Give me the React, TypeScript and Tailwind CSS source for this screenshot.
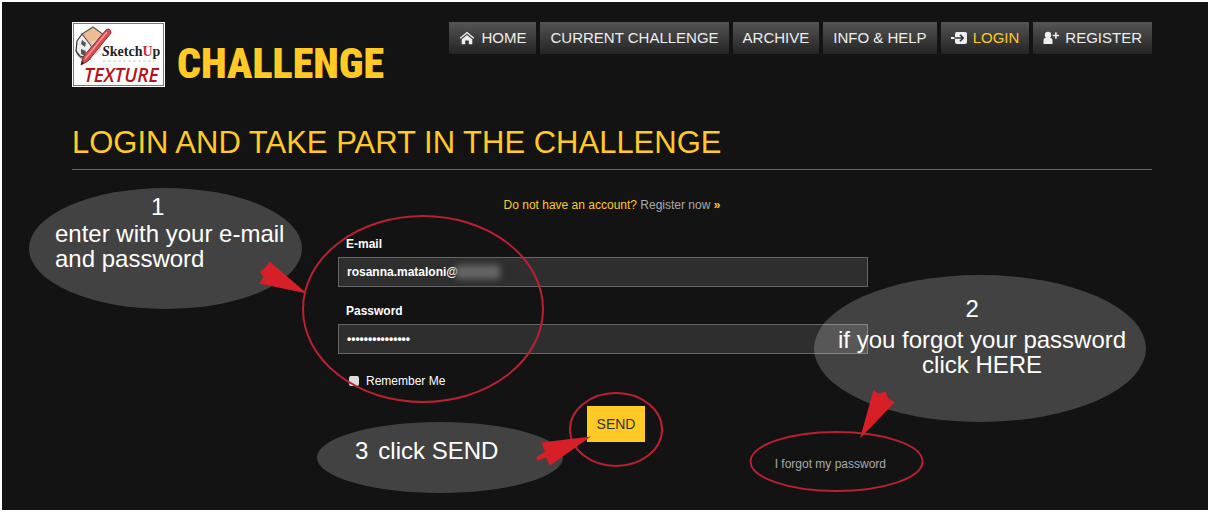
import React, { useState } from 'react';

interface NavItem {
    label: string;
    icon?: React.ComponentType;
    active?: boolean;
}

const HomeIcon: React.FC = () => (
    <svg viewBox="0 0 16 14" className="mr-1.5 h-3.5 w-4" fill="currentColor" aria-hidden="true">
        <path d="M8 0.8 L15.3 6.8 L14.4 7.8 L8 2.6 L1.6 7.8 L0.7 6.8 Z" />
        <path d="M8 3.9 L13.3 8.2 V13.2 H9.8 V9.6 H6.2 V13.2 H2.7 V8.2 Z" />
    </svg>
);

const LoginIcon: React.FC = () => (
    <svg viewBox="0 0 16 14" className="mr-1.5 h-3.5 w-4" aria-hidden="true">
        <rect x="4" y="1" width="12" height="12" rx="2" fill="currentColor" />
        <path d="M0 7 H3.5" stroke="currentColor" strokeWidth="2" />
        <path d="M4 7 H12 M9 3.8 L12.2 7 L9 10.2" stroke="#333" strokeWidth="1.6" fill="none" />
    </svg>
);

const RegisterIcon: React.FC = () => (
    <svg viewBox="0 0 16 14" className="mr-1.5 h-3.5 w-4" fill="currentColor" aria-hidden="true">
        <circle cx="5" cy="4" r="3.2" />
        <path d="M0.5 13 V10 Q0.5 6.8 3 6.8 H7 Q9.5 6.8 9.5 10 V13 Z" />
        <path d="M12.1 1.2 H13.7 V3.7 H16 V5.3 H13.7 V7.8 H12.1 V5.3 H9.7 V3.7 H12.1 Z" />
    </svg>
);

const navItems: NavItem[] = [
    { label: 'HOME', icon: HomeIcon },
    { label: 'CURRENT CHALLENGE' },
    { label: 'ARCHIVE' },
    { label: 'INFO & HELP' },
    { label: 'LOGIN', icon: LoginIcon, active: true },
    { label: 'REGISTER', icon: RegisterIcon },
];

const Logo: React.FC = () => (
    <svg viewBox="0 0 93 65" className="h-[65px] w-[93px] shrink-0" role="img" aria-label="SketchUp Texture">
        <rect width="93" height="65" fill="#fff" />
        <rect x="1.5" y="1.5" width="90" height="62" fill="#fff" stroke="#777" />
        <path d="M5 19 L10 12 L20 20 L18 37 L8 34 L4 29 Z" fill="#eee" stroke="#333" strokeWidth="1.2" />
        <path d="M10 12 L21 5 L32 13 L20 25 Z" fill="#eebc94" stroke="#555" strokeWidth="1.1" />
        <path d="M20 20 L30 16 L29 28 L18 37 Z" fill="#ddd" />
        <path d="M10 18 L14 21 L13 25 L9 22 Z M9 27 L14 29 L13 34 L9 32 Z" fill="#555" />
        <path d="M4 28 Q6 39 16 36" stroke="#444" fill="none" />
        <path d="M34 8 Q38 5 39 11 L16 39 L9 43 L11 35 Z" fill="#d94d4f" stroke="#872c30" strokeWidth="1" />
        <path d="M35 10 L13 37" stroke="#f69a99" strokeWidth="1.5" />
        <path d="M9 43 L10 39 L12 41 Z" fill="#222" />
        <text x="30" y="34" fontSize="14" fontFamily="'Liberation Serif', serif" fontWeight="bold" fill="#222">
            <tspan fontStyle="italic">S</tspan>ketch<tspan fill="#d62c35">U</tspan>p
        </text>
        <path d="M31 39 H86" stroke="#e5e5e5" strokeWidth="2" strokeDasharray="3 2" />
        <text x="12" y="60" fontSize="19" fontFamily="'Open Sans', sans-serif" fontStyle="italic" fontWeight="600" fill="#b3161c">TEXTURE</text>
    </svg>
);

// Circles and arrows drawn over the login page
const Markers: React.FC = () => (
    <svg viewBox="2 2 1206 508" className="pointer-events-none absolute left-0 top-0 h-[508px] w-[1206px]" aria-hidden="true">
        <g fill="#fff" fillOpacity="0.2">
            <ellipse cx="165.5" cy="248.5" rx="136.5" ry="60.5" />
            <ellipse cx="980" cy="348.5" rx="166" ry="73.5" />
            <ellipse cx="440" cy="457.5" rx="123" ry="35.5" />
        </g>
        <g fill="none" stroke="#b92030" strokeWidth="2">
            <ellipse cx="423" cy="309" rx="120" ry="93" />
            <ellipse cx="616" cy="429.5" rx="46" ry="36.5" />
            <ellipse cx="836.5" cy="461.5" rx="86" ry="29.5" />
        </g>
        <g fill="#d71f27">
            <path d="M269.5 261.5 L307 293.5 L259 283.5 L263.5 277 L260 272 L265.5 267.5 Z" />
            <path d="M860 438.5 L873.5 390 L878.5 393.5 L886 391.5 L887.5 397.5 L894.5 402.5 Z" />
            <path d="M591 436.5 L541.5 442.5 L545 451.5 L536 457.5 L538 460.5 L546 457.5 L550 465.5 Z" />
        </g>
    </svg>
);

const inputClass = 'block w-full border border-[#666] bg-[#2e2e2e] px-2 text-xs font-bold text-white outline-none';

const App: React.FC = () => {
    const [email, setEmail] = useState('rosanna.mataloni@');
    const [password, setPassword] = useState('challenge-entry');
    const [remember, setRemember] = useState(false);

    return (
        <div className="relative min-h-screen overflow-hidden border-2 border-white bg-[#131313] pb-8 pl-[70px] pr-14 font-['Liberation_Sans',Arial,sans-serif] text-white">
            <header className="flex items-start justify-between pt-5">
                <a href="#home" className="flex items-start">
                    <Logo />
                    <span className="ml-3 mt-[18px] font-[Impact,'Roboto_Condensed',Roboto,sans-serif] text-[42px] font-black leading-[48px] text-[#ffc926]">CHALLENGE</span>
                </a>
                <nav className="flex gap-1">
                    {navItems.map(({ label, icon: Icon, active }) => (
                        <a
                            key={label}
                            href={`#${label.toLowerCase().replace(/\W+/g, '-')}`}
                            className="flex h-8 items-center whitespace-nowrap bg-linear-to-b from-[#555] to-[#242424] px-2.5 text-[15px] text-[#eee]"
                        >
                            {Icon && <Icon />}
                            <span className={active ? 'text-[#ffc926]' : ''}>{label}</span>
                        </a>
                    ))}
                </nav>
            </header>

            <main>
                <h1 className="mt-9 border-b border-[#666] pb-2 text-[31px] leading-[37px] text-[#ffc926]">LOGIN AND TAKE PART IN THE CHALLENGE</h1>
                <p className="mt-[27px] text-center text-xs text-[#ffc926]">
                    Do not have an account? <a href="#register" className="text-[#aaa]">Register now</a> <b>»</b>
                </p>

                <form className="mx-auto mt-[23px] w-[548px] max-w-full" onSubmit={e => e.preventDefault()}>
                    <div className="mr-[18px]">
                        <label htmlFor="email" className="block pl-2 text-xs font-bold">E-mail</label>
                        <div className="relative mt-[5px]">
                            <input id="email" type="text" value={email} onChange={e => setEmail(e.target.value)} className={`${inputClass} h-[30px]`} />
                            <span className="absolute left-[118px] top-2 h-3.5 w-11 bg-[#666] blur-[3px]" />
                        </div>
                    </div>
                    <div className="mr-[18px] mt-4">
                        <label htmlFor="password" className="block pl-2 text-xs font-bold">Password</label>
                        <input id="password" type="password" value={password} onChange={e => setPassword(e.target.value)} className={`${inputClass} mt-[5px] h-[30px]`} />
                    </div>
                    <div className="mt-[19px] flex items-center pl-[11px]">
                        <input
                            id="remember"
                            type="checkbox"
                            checked={remember}
                            onChange={e => setRemember(e.target.checked)}
                            className="mr-[7px] size-2.5 appearance-none rounded-xs bg-[#ddd] checked:bg-[#ffc926]"
                        />
                        <label htmlFor="remember" className="text-xs">Remember Me</label>
                    </div>
                    <div className="mt-[17px] flex justify-center pl-2">
                        <button type="submit" className="h-9 bg-[#ffc926] px-2.5 text-sm text-[#333]">SEND</button>
                    </div>
                    <p className="mt-3.5 text-right text-xs"><a href="#forgot" className="text-[#aaa]">I forgot my password</a></p>
                </form>
            </main>

            <Markers />
            <div className="pointer-events-none absolute left-[53px] top-48 text-2xl leading-[25px]">
                <p className="mb-0.5 pl-24">1</p>
                <p>enter with your e-mail<br />and password</p>
            </div>
            <div className="pointer-events-none absolute left-[836px] top-[294px] text-center text-2xl leading-[25px]">
                <p className="mb-1.5 pr-5">2</p>
                <p>if you forgot your password<br />click HERE</p>
            </div>
            <p className="pointer-events-none absolute left-[353px] top-[436px] flex gap-2.5 text-2xl leading-[25px]">
                <span>3</span>
                <span>click SEND</span>
            </p>
        </div>
    );
};

export default App;
